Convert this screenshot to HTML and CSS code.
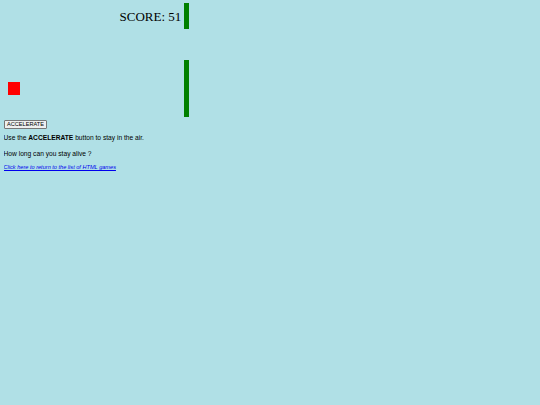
FILE: index.html
```html
<!DOCTYPE html>
<html>
<head>
<meta charset="utf-8">
<link rel="stylesheet" href="styles.css">
</head>
<body>
<div class="game">
  <div class="score">SCORE: 51</div>
  <div class="bar bar-top"></div>
  <div class="bar bar-bottom"></div>
  <div class="player"></div>
</div>
<div class="controls"><button class="btn">ACCELERATE</button></div>
<p class="text first">Use the <b>ACCELERATE</b> button to stay in the air.</p>
<p class="text">How long can you stay alive ?</p>
<p class="back"><a href="#">Click here to return to the list of HTML games</a></p>
</body>
</html>
```
FILE: styles.css
```css
html {
  background: #b0e0e6;
}
body {
  margin: 3px 3.5px;
  font-family: "Liberation Sans", Arial, sans-serif;
  font-size: 6.67px;
  color: #000;
}
.game {
  position: relative;
  width: 200px;
  height: 114px;
}
.score {
  position: absolute;
  left: 116px;
  top: 6.5px;
  font-family: "Liberation Serif", "Times New Roman", serif;
  font-size: 13px;
  line-height: 14px;
  white-space: nowrap;
}
.bar {
  position: absolute;
  left: 180.5px;
  width: 4.5px;
  background: #008000;
}
.bar-top {
  top: 0;
  height: 26px;
}
.bar-bottom {
  top: 57px;
  height: 57px;
}
.player {
  position: absolute;
  left: 4px;
  top: 79px;
  width: 12.5px;
  height: 12.5px;
  background: #ff0000;
}
.controls {
  margin-top: 2.5px;
}
.btn {
  font-family: "Liberation Sans", Arial, sans-serif;
  font-size: 5.6px;
  line-height: 6px;
  padding: 0.5px 2.5px;
  margin: 0;
  border: 1px solid #767676;
  border-radius: 1px;
  background: #efefef;
  color: #000;
}
.text {
  margin: 6.5px 0;
  line-height: 9px;
}
.text.first {
  margin-top: 4.75px;
}
.back {
  margin: 6px 0;
  font-size: 5.6px;
  line-height: 6px;
  font-style: italic;
}
.back a {
  color: #0000ee;
}
```
